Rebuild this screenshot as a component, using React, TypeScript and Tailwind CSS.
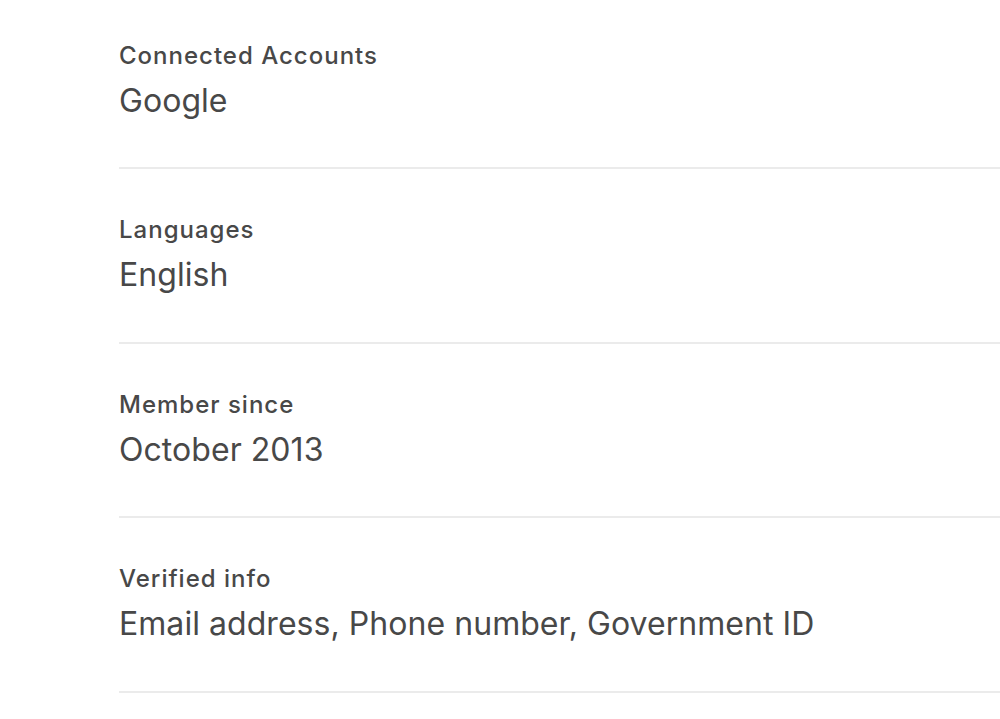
import React from "react";

const rows = [
  { label: "Connected Accounts", value: "Google" },
  { label: "Languages", value: "English" },
  { label: "Member since", value: "October 2013" },
  { label: "Verified info", value: "Email address, Phone number, Government ID" },
];

export default function App() {
  return (
    <div className="w-[1000px] h-[719px] overflow-hidden bg-white pl-[119px] text-[#484848]" style={{ fontFamily: "Inter, 'Noto Sans', sans-serif" }}>
      <div className="flex flex-col -mt-[5.5px]">
        {rows.map((r) => (
          <div key={r.label} className="border-b-2 border-[#ebebeb] pt-[44px] pb-[44.5px]">
            <div className="text-[24px] font-medium leading-[34px] tracking-[1px]">{r.label}</div>
            <div className="text-[32px] font-normal leading-[44px] mt-[6px] tracking-[0.05px]">{r.value}</div>
          </div>
        ))}
      </div>
    </div>
  );
}
